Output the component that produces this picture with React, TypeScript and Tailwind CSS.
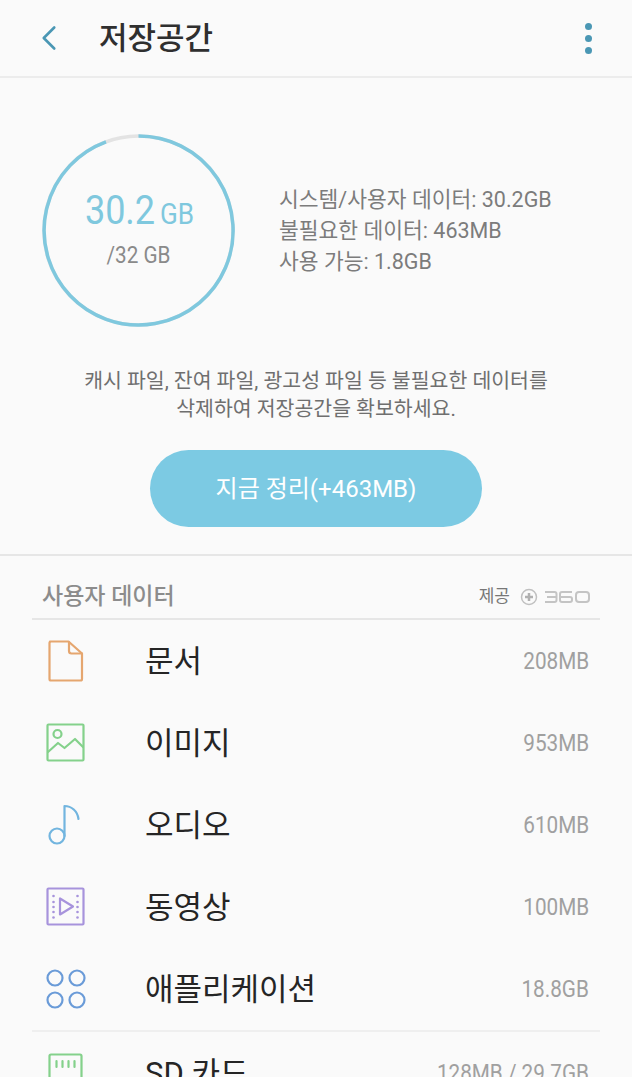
import { ChevronLeft } from 'lucide-react';
import type { ReactNode } from 'react';

function IconBox({ children }: { children: ReactNode }) {
  return (
    <svg width="44" height="44" viewBox="0 0 44 44" fill="none" strokeWidth="2.2" strokeLinejoin="round" strokeLinecap="round">
      {children}
    </svg>
  );
}

const DocIcon = () => (
  <IconBox>
    <g stroke="#e5a66f">
      <path d="M6 2.5h18.5L38 14.500V40a1.500 1.500 0 0 1-1.500 1.500H7A1.500 1.500 0 0 1 5.500 40V4A1.500 1.500 0 0 1 7 2.500z" />
      <path d="M25 3v9a2.500 2.500 0 0 0 2.500 2.500H38" />
    </g>
  </IconBox>
);

const ImageIcon = () => (
  <IconBox>
    <g stroke="#84d18b">
      <rect x="3.500" y="3.500" width="36" height="36" rx="1" />
      <circle cx="13.500" cy="13" r="4" />
      <path d="M4 31l10-9 6.500 5 10.500-9 8 8" />
    </g>
  </IconBox>
);

const NoteIcon = () => (
  <IconBox>
    <g stroke="#72b5df">
      <circle cx="13" cy="33" r="7.500" />
      <path d="M20.500 33V3c7 0 13 5 14 13" />
    </g>
  </IconBox>
);

const VideoIcon = () => (
  <IconBox>
    <g stroke="#a793dc">
      <rect x="3.500" y="3.500" width="36" height="36" rx="1" />
      <path d="M16 13.500v16L29 21.500z" />
    </g>
    <g fill="#a793dc">
      <circle cx="9.500" cy="11" r="1.300" />
      <circle cx="9.500" cy="17" r="1.300" />
      <circle cx="9.500" cy="22" r="1.300" />
      <circle cx="9.500" cy="27" r="1.300" />
      <circle cx="9.500" cy="32.500" r="1.300" />
      <circle cx="33.500" cy="11" r="1.300" />
      <circle cx="33.500" cy="17" r="1.300" />
      <circle cx="33.500" cy="22" r="1.300" />
      <circle cx="33.500" cy="27" r="1.300" />
      <circle cx="33.500" cy="32.500" r="1.300" />
    </g>
  </IconBox>
);

const AppsIcon = () => (
  <IconBox>
    <g stroke="#6a9bd8">
      <circle cx="11" cy="11" r="7.500" />
      <circle cx="33" cy="11" r="7.500" />
      <circle cx="11" cy="33" r="7.500" />
      <circle cx="33" cy="33" r="7.500" />
    </g>
  </IconBox>
);

const SdIcon = () => (
  <IconBox>
    <g stroke="#84d18b">
      <path d="M7 3.500h29a1.500 1.500 0 0 1 1.500 1.500v36H5.500V5A1.500 1.500 0 0 1 7 3.500z" />
      <path d="M12.500 10v6M18.500 10v6M24.500 10v6M30.500 10v6" />
    </g>
  </IconBox>
);

function Logo360() {
  return (
    <span className="flex items-center gap-[6px]">
      <svg width="18" height="18" viewBox="0 0 18 18" fill="none">
        <circle cx="9" cy="9" r="7.500" stroke="#c0c0c0" strokeWidth="1.500" />
        <path d="M9 5v8M5 9h8" stroke="#b0b0b0" strokeWidth="2.500" />
      </svg>
      <svg width="46" height="14" viewBox="0 0 46 14" fill="none" stroke="#c4c4c4" strokeWidth="2">
        <path d="M1 2h9.500a2 2 0 0 1 2 2v6a2 2 0 0 1-2 2H1M3 7h9" />
        <path d="M28 2H18a2 2 0 0 0-2 2v6a2 2 0 0 0 2 2h8a2 2 0 0 0 2-2V9a2 2 0 0 0-2-2h-10" />
        <rect x="32" y="2" width="13" height="10" rx="3" />
      </svg>
    </span>
  );
}

const rows = [
  { name: '문서', size: '208MB', icon: DocIcon },
  { name: '이미지', size: '953MB', icon: ImageIcon },
  { name: '오디오', size: '610MB', icon: NoteIcon },
  { name: '동영상', size: '100MB', icon: VideoIcon },
  { name: '애플리케이션', size: '18.8GB', icon: AppsIcon },
];

function Row({ item }: { item: (typeof rows)[number] }) {
  return (
    <div className="flex items-center h-[82px] pr-[43px]">
      <div className="w-[145px] pl-[44px] flex shrink-0">
        <item.icon />
      </div>
      <span className="flex-1 text-[31px] leading-none text-[#252525]">{item.name}</span>
      <span className="text-[23px] leading-none text-[#a0a0a0] scale-x-90 origin-right">{item.size}</span>
    </div>
  );
}

export default function App() {
  return (
    <div className="w-[632px] h-[1077px] overflow-hidden bg-[#fafafa] font-['Roboto','Noto_Sans_CJK_KR',sans-serif]">
      {/* Header */}
      <header className="flex items-center h-[78px] border-b-2 border-[#ececec] pl-[28px] pr-[40px]">
        <ChevronLeft className="w-[42px] h-[42px] text-[#4a97b4] shrink-0" strokeWidth={1.500} />
        <h1 className="ml-[29px] flex-1 text-[31px] font-medium text-[#2f2f2f] leading-none">저장공간</h1>
        <div className="flex flex-col gap-[5px]">
          <span className="w-[7px] h-[7px] rounded-full bg-[#4a97b4]" />
          <span className="w-[7px] h-[7px] rounded-full bg-[#4a97b4]" />
          <span className="w-[7px] h-[7px] rounded-full bg-[#4a97b4]" />
        </div>
      </header>

      {/* Usage */}
      <section className="flex items-center pt-[56px] pl-[42px]">
        <div className="relative w-[193px] h-[193px] flex flex-col items-center justify-center shrink-0">
          <svg className="absolute inset-0" width="193" height="193" viewBox="0 0 193 193" fill="none" strokeWidth="3.500">
            <circle cx="96.500" cy="96.500" r="94.500" stroke="#e3e3e3" />
            <path d="M96.500 2A94.500 94.500 0 1 1 64 7.800" stroke="#7fc8de" />
          </svg>
          <div className="flex items-baseline gap-[5px] text-[#7fc8de] mt-[-3px] leading-none">
            <span className="text-[40px] scale-x-90">30.2</span>
            <span className="text-[29px] -ml-[6px] scale-x-90">GB</span>
          </div>
          <span className="mt-[13px] text-[23px] leading-none text-[#8a8a8a] scale-x-90">/32 GB</span>
        </div>
        <div className="ml-[44px] text-[21.500px] leading-[31px] text-[#7c7c7c] whitespace-nowrap">
          <p>시스템/사용자 데이터: 30.2GB</p>
          <p>불필요한 데이터: 463MB</p>
          <p>사용 가능: 1.8GB</p>
        </div>
      </section>

      {/* Clean up */}
      <p className="mt-[40px] text-center text-[20.500px] leading-[28px] text-[#6f6f6f]">
        캐시 파일, 잔여 파일, 광고성 파일 등 불필요한 데이터를
        <br />
        삭제하여 저장공간을 확보하세요.
      </p>
      <div className="flex justify-center mt-[27px]">
        <button className="w-[332px] h-[77px] rounded-full bg-[#7ccae3] text-white text-[24px]">
          지금 정리(+463MB)
        </button>
      </div>
      <div className="mt-[27px] border-t-2 border-[#e6e6e6]" />

      {/* User data */}
      <div className="mx-[32px] mt-[20px] h-[44px] flex items-center justify-between pl-[10px] pr-[10px] border-b-2 border-[#e6e6e6]">
        <span className="text-[23px] font-medium text-[#8c8c8c]">사용자 데이터</span>
        <span className="flex items-center gap-[10px] text-[17px] text-[#777777]">
          제공
          <Logo360 />
        </span>
      </div>
      {rows.map((item) => (
        <Row key={item.name} item={item} />
      ))}
      <div className="mx-[32px] border-t-2 border-[#efefef]" />
      <div className="flex items-center h-[82px] pr-[43px]">
        <div className="w-[145px] pl-[44px] flex shrink-0">
          <SdIcon />
        </div>
        <span className="flex-1 text-[31px] leading-none text-[#252525]">SD 카드</span>
        <span className="text-[23px] leading-none text-[#a0a0a0] scale-x-90 origin-right">128MB / 29.7GB</span>
      </div>
    </div>
  );
}
